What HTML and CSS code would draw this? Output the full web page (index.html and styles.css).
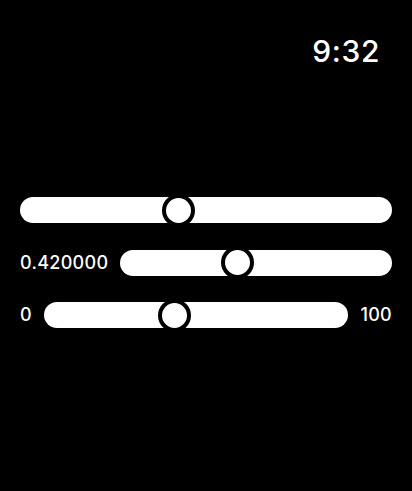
FILE: index.html
```html
<!DOCTYPE html>
<html lang="en">
<head>
<meta charset="utf-8">
<title>Sliders</title>
<link rel="stylesheet" href="styles.css">
</head>
<body>
<div class="screen">
  <header class="status">
    <span class="time">9:32</span>
  </header>
  <main class="sliders">
    <div class="row">
      <div class="slider">
        <div class="track"></div>
        <div class="thumb" style="--v:0.42"></div>
      </div>
    </div>
    <div class="row">
      <span class="label">0.420000</span>
      <div class="slider">
        <div class="track"></div>
        <div class="thumb" style="--v:0.42"></div>
      </div>
    </div>
    <div class="row">
      <span class="label">0</span>
      <div class="slider">
        <div class="track"></div>
        <div class="thumb" style="--v:0.42"></div>
      </div>
      <span class="label">100</span>
    </div>
  </main>
</div>
</body>
</html>
```
FILE: styles.css
```css
html, body {
  margin: 0;
  padding: 0;
  background: #000;
}

.screen {
  width: 412px;
  height: 491px;
  background: #000;
  color: #fff;
  font-family: Inter, "Noto Sans", sans-serif;
  display: flex;
  flex-direction: column;
}

.status {
  display: flex;
  justify-content: flex-end;
  padding: 33px 32px 0 0;
  height: 50px;
}

.time {
  font-size: 30px;
  line-height: 36px;
  font-weight: 500;
  letter-spacing: 0.6px;
}

.sliders {
  display: flex;
  flex-direction: column;
  gap: 19.5px;
  padding: 110.5px 20px 0 20px;
}

.row {
  display: flex;
  align-items: center;
  gap: 12px;
  height: 33px;
}

.label {
  font-size: 18px;
  font-weight: 500;
  line-height: 20px;
  letter-spacing: 0.3px;
  flex: none;
}

.slider {
  position: relative;
  flex: 1;
  height: 33px;
  display: flex;
  align-items: center;
}

.track {
  flex: 1;
  height: 26px;
  border-radius: 13px;
  background: #fff;
}

.thumb {
  position: absolute;
  top: 0;
  left: calc(var(--v) * (100% - 33px));
  width: 25px;
  height: 25px;
  border: 4px solid #000;
  border-radius: 50%;
  background: #fff;
}
```
